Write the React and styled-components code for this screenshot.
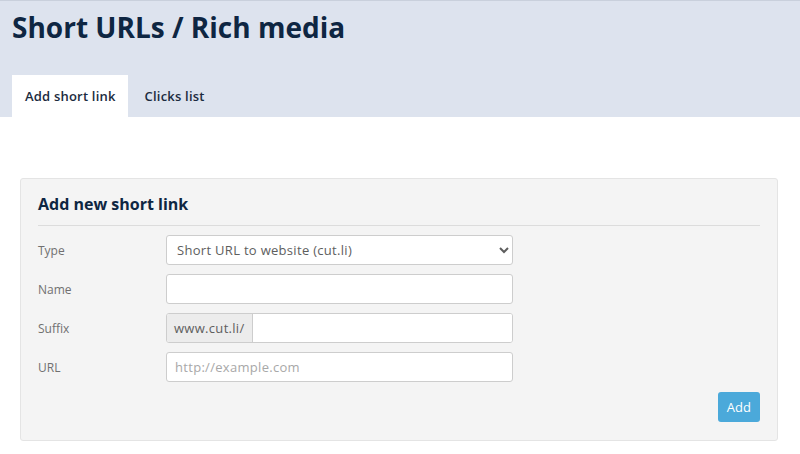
import React from 'react';
import styled, { createGlobalStyle } from 'styled-components';

const GlobalStyle = createGlobalStyle`
  html, body {
    margin: 0;
    padding: 0;
    background: #ffffff;
    font-family: 'Open Sans', 'Liberation Sans', sans-serif;
  }
  * {
    box-sizing: border-box;
  }
`;

const Header = styled.header`
  background: #dde3ee;
  border-top: 1px solid #c9d0dc;
  padding: 9px 12px 0;
  height: 117px;
  display: flex;
  flex-direction: column;
  justify-content: space-between;
`;

const Title = styled.h1`
  margin: 0;
  font-size: 28px;
  font-weight: 700;
  color: #0e2642;
  line-height: 34px;
`;

const Tabs = styled.nav`
  display: flex;
`;

const Tab = styled.div`
  height: 42px;
  display: flex;
  align-items: center;
  font-size: 13px;
  font-weight: 600;
  letter-spacing: 0.2px;
  color: #1b2b40;
  background: ${(p) => (p.$active ? '#ffffff' : 'transparent')};
  padding: 0 12px 0 ${(p) => (p.$active ? '13px' : '17px')};
`;

const Main = styled.main`
  padding: 61px 22px 0 20px;
`;

const Panel = styled.section`
  background: #f4f4f4;
  border: 1px solid #e4e4e4;
  border-radius: 3px;
  padding: 14px 17px 18px 17px;
`;

const PanelTitle = styled.h2`
  margin: 0;
  font-size: 16px;
  font-weight: 700;
  line-height: 22px;
  color: #0e2642;
  padding-bottom: 10px;
  border-bottom: 1px solid #dcdcdc;
  margin-bottom: 9px;
`;

const Row = styled.div`
  display: grid;
  grid-template-columns: 128px 347px;
  align-items: center;
  margin-bottom: 9px;
`;

const Label = styled.label`
  font-size: 12px;
  color: #707070;
`;

const fieldBase = `
  height: 30px;
  width: 100%;
  border: 1px solid #cdcdcd;
  border-radius: 3px;
  background: #ffffff;
  font-family: 'Open Sans', 'Liberation Sans', sans-serif;
  font-size: 13px;
  letter-spacing: 0.3px;
  color: #5e5e5e;
  padding: 0 8px;
  outline: none;
`;

const Select = styled.select`
  ${fieldBase}
  padding: 0 6px;
`;

const Input = styled.input`
  ${fieldBase}
  &::placeholder {
    color: #a8a8a8;
  }
`;

const Group = styled.div`
  display: flex;
  height: 30px;
  border: 1px solid #cdcdcd;
  border-radius: 3px;
  overflow: hidden;
  background: #ffffff;
`;

const Addon = styled.span`
  display: flex;
  align-items: center;
  padding: 0 7px;
  background: #ececec;
  border-right: 1px solid #cdcdcd;
  font-size: 13px;
  letter-spacing: 0.3px;
  color: #5e5e5e;
`;

const GroupInput = styled.input`
  flex: 1;
  border: 0;
  outline: none;
  padding: 0 8px;
  font-size: 13px;
`;

const Actions = styled.div`
  display: flex;
  justify-content: flex-end;
  padding-top: 1px;
`;

const Button = styled.button`
  height: 30px;
  padding: 0 9px;
  border: 0;
  border-radius: 3px;
  background: #4ba9da;
  color: #ffffff;
  font-family: 'Open Sans', 'Liberation Sans', sans-serif;
  font-size: 13px;
`;

export default function App() {
  return (
    <>
      <GlobalStyle />
      <Header>
        <Title>Short URLs / Rich media</Title>
        <Tabs>
          <Tab $active>Add short link</Tab>
          <Tab>Clicks list</Tab>
        </Tabs>
      </Header>
      <Main>
        <Panel>
          <PanelTitle>Add new short link</PanelTitle>
          <Row>
            <Label>Type</Label>
            <Select defaultValue="cut">
              <option value="cut">Short URL to website (cut.li)</option>
            </Select>
          </Row>
          <Row>
            <Label>Name</Label>
            <Input type="text" />
          </Row>
          <Row>
            <Label>Suffix</Label>
            <Group>
              <Addon>www.cut.li/</Addon>
              <GroupInput type="text" />
            </Group>
          </Row>
          <Row>
            <Label>URL</Label>
            <Input type="text" placeholder="http://example.com" />
          </Row>
          <Actions>
            <Button>Add</Button>
          </Actions>
        </Panel>
      </Main>
    </>
  );
}
